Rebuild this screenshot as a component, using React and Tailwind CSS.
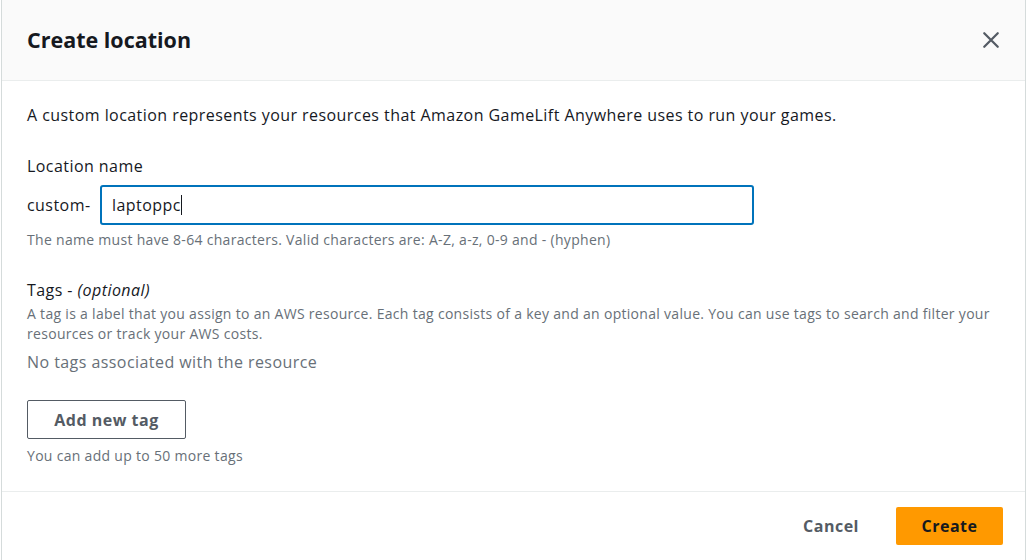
import React from "react";

const font = { fontFamily: '"Open Sans", "Noto Sans", Arial, sans-serif' };

const App = () => {
  return (
    <div className="w-[1028px] h-[560px] bg-white overflow-hidden" style={font}>
      <div className="ml-[1px] w-[1025px] h-full border-x border-[#d5dbdb] flex flex-col">
        {/** header */}
        <div className="h-[81px] shrink-0 bg-[#fafafa] border-b border-[#eaeded] flex items-center justify-between pl-[25px] pr-[25px]">
          <h2 className="text-[21.5px] font-bold text-[#16191f]">Create location</h2>
          <button className="text-[#545b64]">
            <svg width="18" height="18" viewBox="0 0 16 16" fill="none" stroke="currentColor" strokeWidth="2" strokeLinecap="round">
              <path d="M2 2l12 12M14 2L2 14" />
            </svg>
          </button>
        </div>

        {/** body */}
        <div className="flex-1 pl-[25px] pr-[30px] pt-[23px] text-[#16191f]">
          <p className="text-[16px] leading-[22px] tracking-[0.44px]">
            A custom location represents your resources that Amazon GameLift Anywhere uses to run your games.
          </p>

          <div className="mt-[29px] text-[16px] leading-[22px] tracking-[0.44px]">Location name</div>
          <div className="mt-[8px] flex items-center">
            <span className="text-[16px] tracking-[0.44px] w-[73px]">custom-</span>
            <div className="w-[654px] h-[40px] border-2 border-[#0073bb] rounded-[3px] flex items-center pl-[10px] text-[16px] tracking-[0.44px]">
              laptoppc<span className="inline-block w-[1px] h-[20px] bg-[#16191f]" />
            </div>
          </div>
          <div className="mt-[6px] text-[14px] leading-[18px] tracking-[0.3px] text-[#687078]">
            The name must have 8-64 characters. Valid characters are: A-Z, a-z, 0-9 and - (hyphen)
          </div>

          <div className="mt-[30px] text-[16px] leading-[22px] tracking-[0.44px]">
            Tags - <i>(optional)</i>
          </div>
          <p className="mt-[3px] text-[14px] leading-[20px] tracking-[0.3px] text-[#687078]">
            A tag is a label that you assign to an AWS resource. Each tag consists of a key and an optional value. You can use tags to search and filter your resources or track your AWS costs.
          </p>
          <div className="mt-[7px] text-[16px] leading-[22px] tracking-[0.44px] text-[#687078]">No tags associated with the resource</div>

          <button className="mt-[27px] w-[159px] h-[39px] border border-[#545b64] rounded-[2px] text-[16px] font-bold tracking-[0.5px] text-[#545b64]">
            Add new tag
          </button>
          <div className="mt-[7px] text-[14px] leading-[20px] tracking-[0.3px] text-[#687078]">You can add up to 50 more tags</div>
        </div>

        {/** footer */}
        <div className="h-[69px] shrink-0 border-t border-[#eaeded] flex items-center justify-end gap-[37px] pr-[22px] pb-[1px]">
          <button className="text-[16px] font-bold tracking-[0.5px] text-[#545b64]">Cancel</button>
          <button className="w-[107px] h-[38px] bg-[#ff9900] rounded-[2px] text-[16px] font-bold tracking-[0.5px] text-[#16191f]">Create</button>
        </div>
      </div>
    </div>
  );
};

export default App;
